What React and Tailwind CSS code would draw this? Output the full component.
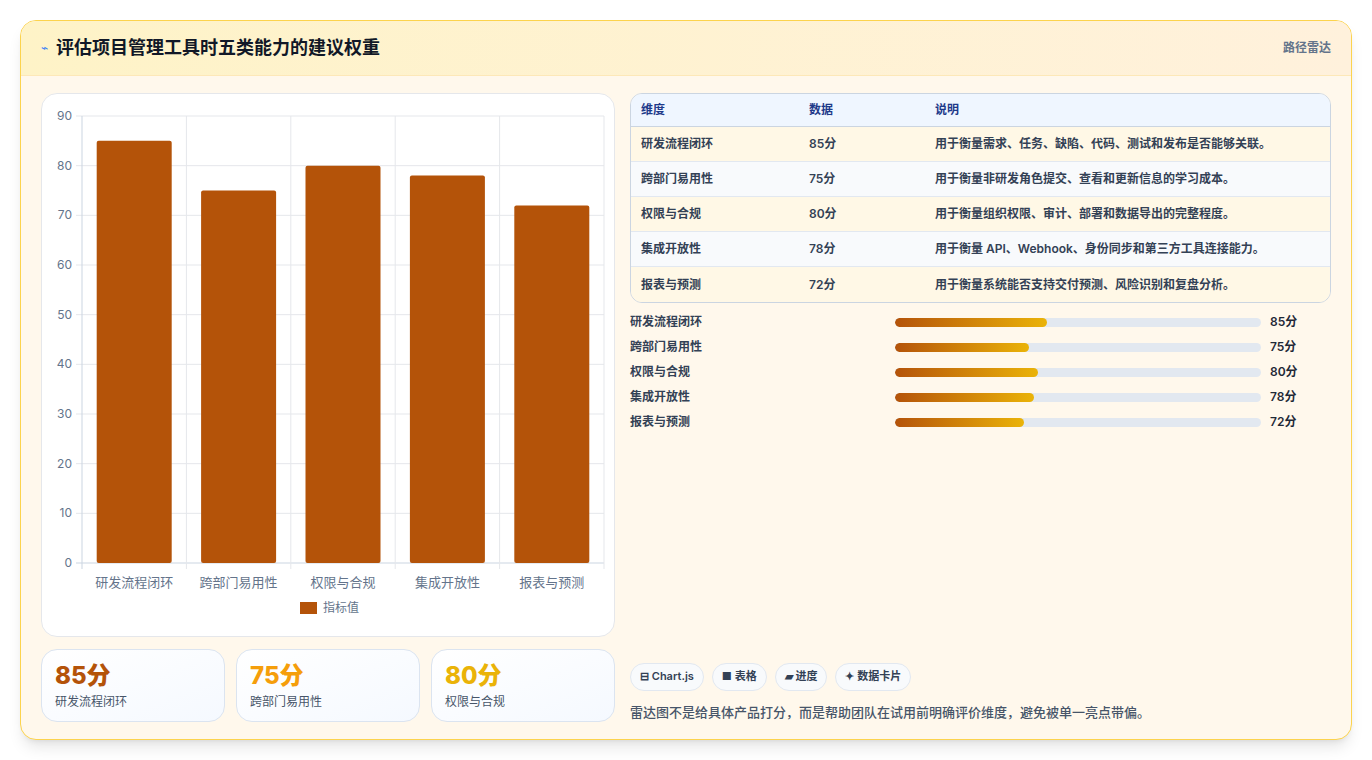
import React from "react";

const rows = [
  { name: "研发流程闭环", v: 85, desc: "用于衡量需求、任务、缺陷、代码、测试和发布是否能够关联。" },
  { name: "跨部门易用性", v: 75, desc: "用于衡量非研发角色提交、查看和更新信息的学习成本。" },
  { name: "权限与合规", v: 80, desc: "用于衡量组织权限、审计、部署和数据导出的完整程度。" },
  { name: "集成开放性", v: 78, desc: "用于衡量 API、Webhook、身份同步和第三方工具连接能力。" },
  { name: "报表与预测", v: 72, desc: "用于衡量系统能否支持交付预测、风险识别和复盘分析。" },
];

function Chart() {
  const L = 40, T = 22, W = 522, H = 447;
  const step = W / 5;
  return (
    <svg width="574" height="543" className="block">
      {[0, 10, 20, 30, 40, 50, 60, 70, 80, 90].map((t) => {
        const y = T + H - (t / 90) * H;
        return (
          <g key={t}>
            <line x1={L - 6} x2={L + W} y1={y} y2={y} stroke={t === 0 ? "#cbd5e1" : "#e5e7eb"} />
            <text x={L - 10} y={y + 4} textAnchor="end" fontSize="12" fill="#64748b">{t}</text>
          </g>
        );
      })}
      {[0, 1, 2, 3, 4, 5].map((i) => (
        <line key={i} x1={L + i * step} x2={L + i * step} y1={T} y2={T + H + 6} stroke={i === 0 ? "#cbd5e1" : "#e5e7eb"} />
      ))}
      {rows.map((r, i) => {
        const h = (r.v / 90) * H;
        const x = L + i * step + (step - 75) / 2;
        return (
          <g key={r.name}>
            <rect x={x} y={T + H - h} width="75" height={h} rx="2" fill="#b45309" />
            <text x={L + i * step + step / 2} y={T + H + 24} textAnchor="middle" fontSize="13" fill="#64748b">{r.name}</text>
          </g>
        );
      })}
      <rect x="258" y="508" width="17" height="12" fill="#b45309" />
      <text x="281" y="518" fontSize="12" fill="#64748b">指标值</text>
    </svg>
  );
}

export default function App() {
  const colors = ["text-[#b45309]", "text-[#f59e0b]", "text-[#eab308]"];
  return (
    <div className="w-[1372px] h-[760px] bg-white p-5 pb-0" style={{ fontFamily: "Inter, 'Noto Sans CJK SC', sans-serif" }}>
      <div className="h-[720px] rounded-2xl border border-[#fcd34d] bg-[#fff8ec] shadow-lg overflow-hidden flex flex-col">
        <div className="h-[55px] shrink-0 bg-gradient-to-r from-[#fef3c7] to-[#fff1dc] border-b border-[#fde8b8] flex items-center justify-between px-5">
          <div className="flex items-center gap-2">
            <span className="text-[#3b82f6] text-xs">⌁</span>
            <h1 className="text-lg font-bold text-[#111827]">评估项目管理工具时五类能力的建议权重</h1>
          </div>
          <span className="text-xs text-[#64748b] font-semibold">路径雷达</span>
        </div>
        <div className="flex-1 flex gap-[15px] px-5 pt-[17px] pb-[18px]">
          <div className="w-[574px] flex flex-col gap-3">
            <div className="h-[544px] bg-white rounded-2xl border border-[#e5e7eb]">
              <Chart />
            </div>
            <div className="grid grid-cols-3 gap-[11px]">
              {rows.slice(0, 3).map((r, i) => (
                <div key={r.name} className="h-[73px] rounded-2xl border border-[#dbe4f0] bg-gradient-to-br from-white to-[#f5f9ff] px-[13px] pt-[10px]">
                  <div className={`text-2xl font-extrabold ${colors[i]}`}>{r.v}分</div>
                  <div className="text-xs text-[#475569] mt-[2px]">{r.name}</div>
                </div>
              ))}
            </div>
          </div>
          <div className="flex-1 flex flex-col">
            <div className="rounded-xl border border-[#cbd5e1] overflow-hidden text-xs">
              <div className="h-[33px] bg-[#eff6ff] border-b border-[#cbd5e1] flex items-center px-[10px] font-semibold text-[#1e3a8a]">
                <span className="w-[168px]">维度</span><span className="w-[126px]">数据</span><span>说明</span>
              </div>
              {rows.map((r, i) => (
                <div key={r.name} className={`h-[35px] flex items-center px-[10px] font-semibold text-[#334155] ${i % 2 ? "bg-[#f8fafc]" : "bg-[#fff8e6]"} ${i < 4 ? "border-b border-[#e2e8f0]" : ""}`}>
                  <span className="w-[168px]">{r.name}</span><span className="w-[126px]">{r.v}分</span><span>{r.desc}</span>
                </div>
              ))}
            </div>
            <div className="mt-[12px] flex flex-col gap-[11px]">
              {rows.map((r) => (
                <div key={r.name} className="h-[14px] flex items-center text-xs font-semibold text-[#334155]">
                  <span className="w-[265px]">{r.name}</span>
                  <div className="w-[366px] h-[9px] rounded-full bg-[#e2e8f0] overflow-hidden">
                    <div className="h-full rounded-full bg-gradient-to-r from-[#b45309] to-[#eab308]" style={{ width: `${r.v / 2.05}%` }} />
                  </div>
                  <span className="ml-[9px] text-[#1f2937]">{r.v}分</span>
                </div>
              ))}
            </div>
            <div className="mt-auto flex gap-2 text-[11px] font-semibold text-[#334155]">
              {["⊟ Chart.js", "■ 表格", "▰ 进度", "✦ 数据卡片"].map((t) => (
                <span key={t} className="h-[28px] px-[9px] flex items-center rounded-full border border-[#e2e8f0] bg-[#f8fafc]">{t}</span>
              ))}
            </div>
            <p className="mt-[12px] text-[13px] text-[#475569] font-medium">雷达图不是给具体产品打分，而是帮助团队在试用前明确评价维度，避免被单一亮点带偏。</p>
          </div>
        </div>
      </div>
    </div>
  );
}
